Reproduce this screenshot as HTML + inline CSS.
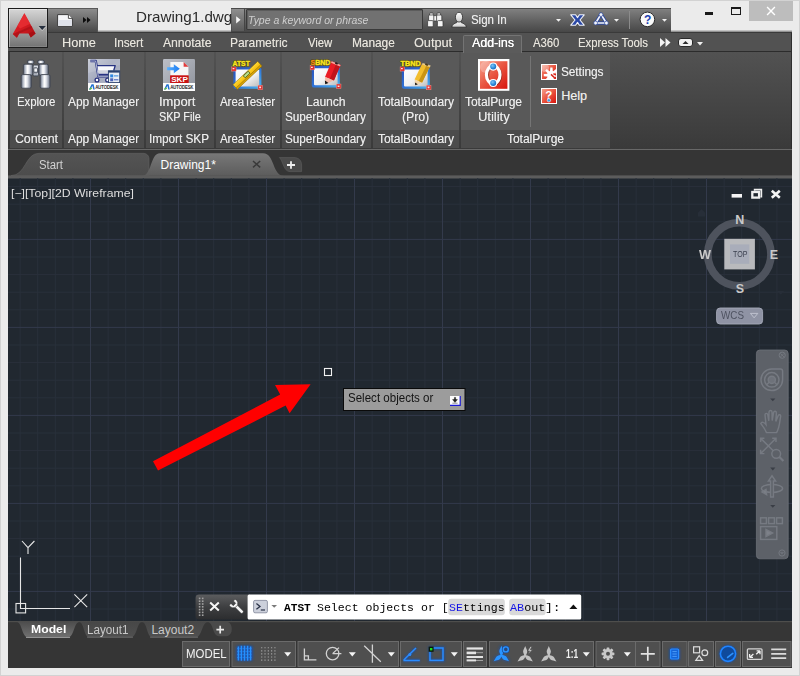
<!DOCTYPE html>
<html>
<head>
<meta charset="utf-8">
<title>Drawing1.dwg</title>
<style>
*{box-sizing:border-box;margin:0;padding:0}
html,body{width:800px;height:676px;overflow:hidden}
body{background:#ebebeb;font-family:"Liberation Sans",sans-serif;position:relative;color:#e4e4e4}
.a{position:absolute}
.t{position:absolute;white-space:nowrap;line-height:14px;font-size:12px}
svg{position:absolute;overflow:visible}
#frame{left:0;top:0;width:800px;height:676px;border:1px solid #d2d2d2}
/* title bar */
#appbtn{left:8px;top:8px;width:40px;height:40px;border:1px solid #1c1c1c;background:linear-gradient(#d6d6d6,#aaaaaa 45%,#737373);box-shadow:inset 1px 1px 0 0 rgba(255,255,255,.35),inset -1px -1px 0 0 rgba(255,255,255,.12)}
#qat{left:48px;top:8px;width:50px;height:24px;background:linear-gradient(#8c8c8c,#6a6a6a 50%,#484848);border-top:1px solid #5a5a5a;border-right:1px solid #555}
#info{left:231px;top:8px;width:440px;height:24px;background:linear-gradient(#808080,#626262 50%,#474747);border-top:1px solid #4a4a4a}
#srch{left:246px;top:9px;width:177px;height:21px;background:#717171;border:1px solid #3a3a3a;border-radius:1px;box-shadow:inset 1px 1px 0 rgba(0,0,0,.18)}
#closeb{left:749px;top:1px;width:44px;height:20px;background:#bdbdbd}
/* menu bar */
#menubar{left:8px;top:31px;width:784px;height:20px;background:#525252;border-top:2px solid #3a3a3a;box-shadow:0 -0.5px 0 #9a9a9a}
#acttab{left:463px;top:35px;width:59px;height:18px;background:#5b5b5b;border:1px solid #747474;border-bottom:none;border-radius:2px 2px 0 0;z-index:2}
.t{z-index:3}
/* ribbon */
#ribbon{left:8px;top:51px;width:784px;height:98px;background:linear-gradient(#525252,#3a3a3a);border-top:1px solid #2c2c2c;border-left:2px solid #3a3a3a}
.p{top:52px;height:96px;background:#595959}
.pt{top:130px;height:18px;background:#4c4c4c}
.lb{color:#ebebeb}
/* doc tabs */
#tabbar{left:8px;top:149px;width:784px;height:30px;background:#353535;border-top:1px solid #686868}
/* drawing */
#draw{left:8px;top:178px;width:784px;height:443px;background:#212830;overflow:hidden}
/* layout tabs + status */
#laybar{left:8px;top:621px;width:784px;height:19px;background:#363636;border-top:1px solid #4a4a44}
#status{left:8px;top:640px;width:784px;height:28px;background:#353535}
.g{top:641px;height:26px;background:#505050;border:1px solid #6d6d6d}
</style>
</head>
<body>
<div id="frame" class="a"></div>

<!-- ===== TITLE BAR ===== -->
<div id="menubar" class="a"></div>
<div class="a" style="left:98px;top:31px;width:133px;height:1px;background:#939393"></div><div class="a" style="left:671px;top:31px;width:121px;height:1px;background:#939393"></div>
<div id="qat" class="a"></div>
<div id="appbtn" class="a"></div>
<div id="info" class="a"></div>
<div id="srch" class="a"></div>
<div id="closeb" class="a"></div>
<div class="t" style="left:135.94px;top:8.00px;font-size:15px;line-height:18px;transform:scaleX(1.013);transform-origin:0 0;color:#2b2b2b">Drawing1.dwg</div>
<!--TI0--><!-- App logo A -->
<svg style="left:8px;top:8px" width="40" height="40" viewBox="8 8 40 40">
<defs><linearGradient id="alg" x1="0" x2="1" y1="0" y2="1"><stop offset="0" stop-color="#e8262c"/><stop offset=".55" stop-color="#d01a20"/><stop offset="1" stop-color="#a80d12"/></linearGradient></defs>
<path d="M24.4 13.2L35.6 33.6L30.8 37.6L28.6 33.4H19.2L16.9 37.8L12.8 33.9z" fill="url(#alg)"/>
<path d="M24.4 13.2L30.2 23.8L20 28.6L17.6 25.6z" fill="#ea3036" opacity=".75"/>
<path d="M12.8 33.9L31.4 26L32.4 27.8L19.2 33.4L16.9 37.8z" fill="#ae1217" opacity=".85"/>
<path d="M28.6 33.4L33 31.4L35.6 33.6L30.8 37.6z" fill="#a50e13" opacity=".8"/>
<path d="M38.6 26H45.8L42.2 30z" fill="#27303f"/>
<path d="M38.2 26.6L42.2 30.8L46.2 26.6" fill="none" stroke="#d9d9d9" stroke-width=".7" opacity=".7"/>
</svg>

<!-- QAT: new doc + chevrons -->
<svg style="left:57px;top:14px" width="17" height="14" viewBox="0 0 17 14">
<path d="M0.6 0.6H11.4L15.4 4.4V12.4H0.6z" fill="#f4f5f8" stroke="#3c3c3c" stroke-width="1"/>
<path d="M1.2 6H14.8V11.8H1.2z" fill="#dfe2ea"/>
<path d="M11.4 0.6V4.4H15.4" fill="#fff" stroke="#3c3c3c" stroke-width=".9"/>
</svg>
<svg style="left:83px;top:17px" width="8" height="6" viewBox="0 0 8 6"><path d="M0 0L3.6 3L0 6zM4 0L7.6 3L4 6z" fill="#0c0c0c"/></svg>

<!-- search arrow button -->
<div class="a" style="left:232px;top:9px;width:13px;height:22px;background:linear-gradient(#8f8f8f,#5a5a5a);border-right:1px solid #444"></div>
<svg style="left:236px;top:16px" width="5" height="8" viewBox="0 0 5 8"><path d="M0.2 0.2L4.6 3.8L0.2 7.4z" fill="#f6f6f6"/></svg>
<div class="t" style="left:247.92px;top:14.00px;font-size:11px;line-height:13px;transform:scaleX(0.953);transform-origin:0 0;color:#cfcfcf;font-style:italic">Type a keyword or phrase</div>

<!-- binoculars small -->
<svg style="left:427px;top:12px" width="17" height="16" viewBox="427 12 17 16">
<g fill="#f4f4f4" stroke="#2e2e2e" stroke-width=".7">
<rect x="429.6" y="13" width="3.6" height="3" rx=".8"/><rect x="437" y="13" width="3.6" height="3" rx=".8"/>
<rect x="433" y="15.6" width="4.2" height="5.4" rx=".6"/>
<rect x="428.6" y="15" width="5.2" height="6.4" rx="1"/><rect x="436.6" y="15" width="5.2" height="6.4" rx="1"/>
<rect x="427.6" y="20.6" width="5.6" height="6.2" rx="1"/><rect x="437.4" y="20.6" width="5.6" height="6.2" rx="1"/>
</g></svg>
<!-- user -->
<svg style="left:451px;top:11px" width="17" height="17" viewBox="451 11 17 17">
<defs><linearGradient id="usr" x1="0" x2="0" y1="0" y2="1"><stop offset="0" stop-color="#ffffff"/><stop offset="1" stop-color="#c9c9c9"/></linearGradient></defs>
<path d="M451.8 27.2C452.2 24.2 454.4 23.4 456.8 22.6V21.4H461.2V22.6C463.6 23.4 465.8 24.2 466.4 27.2z" fill="url(#usr)" stroke="#2a2a2a" stroke-width=".8"/>
<ellipse cx="459" cy="17.2" rx="3.6" ry="4.9" fill="url(#usr)" stroke="#2a2a2a" stroke-width=".8"/>
</svg>
<div class="t" style="left:471.36px;top:13.00px;font-size:12px;line-height:14px;transform:scaleX(0.952);transform-origin:0 0;color:#ededed;text-shadow:.25px 0 0 rgba(237,237,237,.55)">Sign In</div>
<svg style="left:556px;top:19px" width="5" height="3" viewBox="0 0 5 3"><path d="M0 0H5L2.5 2.8z" fill="#f2f2f2"/></svg>
<!-- X (exchange) -->
<svg style="left:570px;top:14px" width="15" height="12" viewBox="0 0 15 12">
<path d="M0.8 0.8H5.6L7.5 3.6L9.4 0.8H14.2L10 6L14.2 11.2H9.4L7.5 8.4L5.6 11.2H0.8L5 6z" fill="#2a48a6" stroke="#f1f3fa" stroke-width="1.1" stroke-linejoin="round"/>
</svg>
<!-- A360 triangle -->
<svg style="left:593px;top:12px" width="16" height="14" viewBox="0 0 16 14">
<path d="M8 2.4L13.4 11H2.6z" fill="none" stroke="#2f4a9c" stroke-width="3.4" stroke-linejoin="round"/>
<path d="M8 2.4L13.4 11H2.6z" fill="none" stroke="#f4f6fb" stroke-width="1.7" stroke-linejoin="round"/>
<circle cx="8" cy="2.6" r="1.9" fill="#f4f6fb" stroke="#2f4a9c" stroke-width=".7"/><circle cx="2.6" cy="11" r="1.9" fill="#f4f6fb" stroke="#2f4a9c" stroke-width=".7"/><circle cx="13.4" cy="11" r="1.9" fill="#f4f6fb" stroke="#2f4a9c" stroke-width=".7"/>
</svg>
<svg style="left:614px;top:19px" width="5" height="3" viewBox="0 0 5 3"><path d="M0 0H5L2.5 2.8z" fill="#f2f2f2"/></svg>
<div class="a" style="left:629px;top:11px;width:1px;height:18px;background:#8b8b8b"></div>
<!-- help ? -->
<svg style="left:639px;top:11px" width="17" height="17" viewBox="0 0 17 17">
<circle cx="8.4" cy="8.4" r="7.3" fill="#fafafa" stroke="#2b2b2b" stroke-width="1"/>
<text x="4.9" y="12.7" font-family="Liberation Sans,sans-serif" font-weight="bold" font-size="12" fill="#2140b0">?</text>
</svg>
<svg style="left:662px;top:19px" width="5" height="3" viewBox="0 0 5 3"><path d="M0 0H5L2.5 2.8z" fill="#f2f2f2"/></svg>

<!-- window controls -->
<div class="a" style="left:705px;top:12px;width:8px;height:2.7px;background:#1a1a1a"></div>
<div class="a" style="left:731px;top:7px;width:10px;height:8px;border:1px solid #1a1a1a;border-top-width:2px"></div>
<svg style="left:766px;top:6px" width="10" height="10" viewBox="0 0 10 10"><path d="M1.1 1.1L8.9 8.9M8.9 1.1L1.1 8.9" stroke="#fff" stroke-width="1.4"/></svg>
<!--TI1-->

<!-- ===== MENU ===== -->
<div id="acttab" class="a"></div>
<div class="t" style="left:61.53px;top:35.00px;font-size:13px;line-height:16px;transform:scaleX(0.973);transform-origin:0 0;color:#e9e6de;text-shadow:.25px 0 0 rgba(233,230,222,.5)">Home</div>
<div class="t" style="left:114.06px;top:35.00px;font-size:13px;line-height:16px;transform:scaleX(0.899);transform-origin:0 0;color:#e9e6de;text-shadow:.25px 0 0 rgba(233,230,222,.5)">Insert</div>
<div class="t" style="left:163.44px;top:35.00px;font-size:13px;line-height:16px;transform:scaleX(0.930);transform-origin:0 0;color:#e9e6de;text-shadow:.25px 0 0 rgba(233,230,222,.5)">Annotate</div>
<div class="t" style="left:230.28px;top:35.00px;font-size:13px;line-height:16px;transform:scaleX(0.916);transform-origin:0 0;color:#e9e6de;text-shadow:.25px 0 0 rgba(233,230,222,.5)">Parametric</div>
<div class="t" style="left:307.93px;top:35.00px;font-size:13px;line-height:16px;transform:scaleX(0.860);transform-origin:0 0;color:#e9e6de;text-shadow:.25px 0 0 rgba(233,230,222,.5)">View</div>
<div class="t" style="left:351.59px;top:35.00px;font-size:13px;line-height:16px;transform:scaleX(0.909);transform-origin:0 0;color:#e9e6de;text-shadow:.25px 0 0 rgba(233,230,222,.5)">Manage</div>
<div class="t" style="left:414.02px;top:35.00px;font-size:13px;line-height:16px;transform:scaleX(0.974);transform-origin:0 0;color:#e9e6de;text-shadow:.25px 0 0 rgba(233,230,222,.5)">Output</div>
<div class="t" style="left:472.44px;top:35.00px;font-size:13px;line-height:16px;transform:scaleX(0.950);transform-origin:0 0;color:#fff;text-shadow:0.3px 0 0 #fff">Add-ins</div>
<div class="t" style="left:532.95px;top:35.00px;font-size:13px;line-height:16px;transform:scaleX(0.862);transform-origin:0 0;color:#e9e6de;text-shadow:.25px 0 0 rgba(233,230,222,.5)">A360</div>
<div class="t" style="left:577.83px;top:35.00px;font-size:13px;line-height:16px;transform:scaleX(0.866);transform-origin:0 0;color:#e9e6de;text-shadow:.25px 0 0 rgba(233,230,222,.5)">Express Tools</div>
<svg style="left:660px;top:38px" width="11" height="9" viewBox="0 0 11 9"><path d="M0 0L5 4.5L0 9zM5.5 0L10.5 4.5L5.5 9z" fill="#f2f2f2"/></svg>
<svg style="left:678px;top:38px" width="15" height="9" viewBox="0 0 15 9"><rect x="0.5" y="0.5" width="14" height="8" rx="2.5" fill="#f0f0f0" stroke="#2a2a2a"/><path d="M4.5 6L7.5 3L10.5 6z" fill="#2b2b2b"/></svg>
<svg style="left:697px;top:42px" width="6" height="4" viewBox="0 0 6 4"><path d="M0 0H6L3 3.5z" fill="#efefef"/></svg>


<!-- ===== RIBBON ===== -->
<div id="ribbon" class="a"></div>
<div class="a" style="left:791px;top:33px;width:1px;height:116px;background:#2e2e2e"></div>
<div class="a p" style="left:10px;width:52px"></div><div class="a pt" style="left:10px;width:52px"></div>
<div class="a p" style="left:64px;width:80px"></div><div class="a pt" style="left:64px;width:80px"></div>
<div class="a p" style="left:146px;width:68px"></div><div class="a pt" style="left:146px;width:68px"></div>
<div class="a p" style="left:216px;width:64px"></div><div class="a pt" style="left:216px;width:64px"></div>
<div class="a p" style="left:282px;width:89px"></div><div class="a pt" style="left:282px;width:89px"></div>
<div class="a p" style="left:373px;width:86px"></div><div class="a pt" style="left:373px;width:86px"></div>
<div class="a p" style="left:461px;width:149px"></div><div class="a pt" style="left:461px;width:149px"></div>
<div class="a" style="left:530px;top:56px;width:1px;height:71px;background:#757575"></div>
<div class="t" style="left:16.50px;top:95.00px;font-size:12.5px;line-height:15px;transform:scaleX(0.902);transform-origin:0 0;color:#ededed;text-shadow:.25px 0 0 rgba(237,237,237,.55)">Explore</div>
<div class="t" style="left:68.44px;top:95.00px;font-size:12.5px;line-height:15px;transform:scaleX(0.947);transform-origin:0 0;color:#ededed;text-shadow:.25px 0 0 rgba(237,237,237,.55)">App Manager</div>
<div class="t" style="left:159.26px;top:95.00px;font-size:12.5px;line-height:15px;transform:scaleX(1.027);transform-origin:0 0;color:#ededed;text-shadow:.25px 0 0 rgba(237,237,237,.55)">Import</div>
<div class="t" style="left:158.69px;top:110.00px;font-size:12.5px;line-height:15px;transform:scaleX(0.861);transform-origin:0 0;color:#ededed;text-shadow:.25px 0 0 rgba(237,237,237,.55)">SKP File</div>
<div class="t" style="left:219.95px;top:95.00px;font-size:12.5px;line-height:15px;transform:scaleX(0.910);transform-origin:0 0;color:#ededed;text-shadow:.25px 0 0 rgba(237,237,237,.55)">AreaTester</div>
<div class="t" style="left:306.04px;top:95.00px;font-size:12.5px;line-height:15px;transform:scaleX(0.964);transform-origin:0 0;color:#ededed;text-shadow:.25px 0 0 rgba(237,237,237,.55)">Launch</div>
<div class="t" style="left:285.44px;top:110.00px;font-size:12.5px;line-height:15px;transform:scaleX(0.930);transform-origin:0 0;color:#ededed;text-shadow:.25px 0 0 rgba(237,237,237,.55)">SuperBoundary</div>
<div class="t" style="left:377.91px;top:95.00px;font-size:12.5px;line-height:15px;transform:scaleX(0.951);transform-origin:0 0;color:#ededed;text-shadow:.25px 0 0 rgba(237,237,237,.55)">TotalBoundary</div>
<div class="t" style="left:402.05px;top:110.00px;font-size:12.5px;line-height:15px;transform:scaleX(0.976);transform-origin:0 0;color:#ededed;text-shadow:.25px 0 0 rgba(237,237,237,.55)">(Pro)</div>
<div class="t" style="left:465.41px;top:95.00px;font-size:12.5px;line-height:15px;transform:scaleX(0.953);transform-origin:0 0;color:#ededed;text-shadow:.25px 0 0 rgba(237,237,237,.55)">TotalPurge</div>
<div class="t" style="left:477.66px;top:110.00px;font-size:12.5px;line-height:15px;transform:scaleX(1.035);transform-origin:0 0;color:#ededed;text-shadow:.25px 0 0 rgba(237,237,237,.55)">Utility</div>
<div class="t" style="left:561.13px;top:65.00px;font-size:12.5px;line-height:15px;transform:scaleX(0.939);transform-origin:0 0;color:#ededed;text-shadow:.25px 0 0 rgba(237,237,237,.55)">Settings</div>
<div class="t" style="left:561.20px;top:89.00px;font-size:12.5px;line-height:15px;color:#ededed;text-shadow:.25px 0 0 rgba(237,237,237,.55)">Help</div>
<div class="t" style="left:14.50px;top:132.00px;font-size:12.5px;line-height:15px;transform:scaleX(0.981);transform-origin:0 0;color:#ededed;text-shadow:.25px 0 0 rgba(237,237,237,.55)">Content</div>
<div class="t" style="left:68.44px;top:132.00px;font-size:12.5px;line-height:15px;transform:scaleX(0.947);transform-origin:0 0;color:#ededed;text-shadow:.25px 0 0 rgba(237,237,237,.55)">App Manager</div>
<div class="t" style="left:149.05px;top:132.00px;font-size:12.5px;line-height:15px;transform:scaleX(0.938);transform-origin:0 0;color:#ededed;text-shadow:.25px 0 0 rgba(237,237,237,.55)">Import SKP</div>
<div class="t" style="left:219.95px;top:132.00px;font-size:12.5px;line-height:15px;transform:scaleX(0.910);transform-origin:0 0;color:#ededed;text-shadow:.25px 0 0 rgba(237,237,237,.55)">AreaTester</div>
<div class="t" style="left:285.44px;top:132.00px;font-size:12.5px;line-height:15px;transform:scaleX(0.930);transform-origin:0 0;color:#ededed;text-shadow:.25px 0 0 rgba(237,237,237,.55)">SuperBoundary</div>
<div class="t" style="left:377.91px;top:132.00px;font-size:12.5px;line-height:15px;transform:scaleX(0.951);transform-origin:0 0;color:#ededed;text-shadow:.25px 0 0 rgba(237,237,237,.55)">TotalBoundary</div>
<div class="t" style="left:507.41px;top:132.00px;font-size:12.5px;line-height:15px;transform:scaleX(0.953);transform-origin:0 0;color:#ededed;text-shadow:.25px 0 0 rgba(237,237,237,.55)">TotalPurge</div>
<!--RI0--><svg width="0" height="0" style="left:0;top:0"><defs>
<linearGradient id="met" x1="0" x2="1" y1="0" y2="0"><stop offset="0" stop-color="#596070"/><stop offset=".2" stop-color="#b3bac7"/><stop offset=".42" stop-color="#ffffff"/><stop offset=".6" stop-color="#e6e9f0"/><stop offset=".85" stop-color="#9299a8"/><stop offset="1" stop-color="#565d6c"/></linearGradient>
<linearGradient id="met2" x1="0" x2="0" y1="0" y2="1"><stop offset="0" stop-color="#c9ced8"/><stop offset=".5" stop-color="#ffffff"/><stop offset="1" stop-color="#8d95a3"/></linearGradient>
<linearGradient id="amg" x1="0" x2="1" y1="0" y2="1"><stop offset="0" stop-color="#c3c7d3"/><stop offset=".45" stop-color="#a3a9bd"/><stop offset="1" stop-color="#bfc3cf"/></linearGradient>
<linearGradient id="skg" x1="0" x2="1" y1="0" y2="1"><stop offset="0" stop-color="#bcbfc7"/><stop offset="1" stop-color="#8f939c"/></linearGradient>
<linearGradient id="barw" x1="0" x2="1" y1="0" y2="1"><stop offset="0" stop-color="#ffffff"/><stop offset=".55" stop-color="#f1f1f1"/><stop offset="1" stop-color="#bdbdbd"/></linearGradient>
<linearGradient id="bluf" x1="0" x2="1" y1="0" y2="1"><stop offset="0" stop-color="#2a4fb8"/><stop offset=".5" stop-color="#2f72d6"/><stop offset="1" stop-color="#48b8f4"/></linearGradient>
<linearGradient id="arb" x1="0" x2="1" y1="0" y2="0"><stop offset="0" stop-color="#58b0ff"/><stop offset="1" stop-color="#1f7cf0"/></linearGradient>
<linearGradient id="redg" x1="0" x2="1" y1="0" y2="1"><stop offset="0" stop-color="#f6a08c"/><stop offset=".45" stop-color="#ea5a45"/><stop offset="1" stop-color="#d8140c"/></linearGradient>
<radialGradient id="sph" cx=".4" cy=".35" r=".7"><stop offset="0" stop-color="#7fc4f4"/><stop offset=".6" stop-color="#2b8bdc"/><stop offset="1" stop-color="#1b62b5"/></radialGradient>
<linearGradient id="yel" x1="0" x2="0" y1="0" y2="1"><stop offset="0" stop-color="#ffd93a"/><stop offset=".55" stop-color="#f7c010"/><stop offset="1" stop-color="#d19a00"/></linearGradient>
<g id="adsk"><rect x="0" y="24" width="32" height="8" fill="#fdfdfd"/><path d="M1 30.6L3.6 25.2L5.6 25.2L6.8 30.6L5.3 30.6L4.4 26.8L2.6 30.6z" fill="#1f6fd0"/><path d="M1 30.6L2.4 28.6L4.4 29.4L2.6 30.6z" fill="#5cbf3a"/><text x="7.6" y="29.9" font-family="Liberation Sans,sans-serif" font-size="4.6" textLength="22.8" lengthAdjust="spacingAndGlyphs" fill="#0a0a0a" stroke="#0a0a0a" stroke-width=".15">AUTODESK</text></g>
<g id="winfr"><rect x="2" y="7.6" width="28" height="21.6" rx="2.2" fill="url(#bluf)"/><rect x="4.2" y="9.8" width="23.6" height="17" rx="1" fill="url(#barw)"/><rect x="0.3" y="7.3" width="4.4" height="4.2" fill="#e12a2a" stroke="#f4a8a0" stroke-width=".4"/><rect x="26.6" y="25.6" width="4.6" height="4.6" fill="#e12a2a" stroke="#f4a8a0" stroke-width=".4"/><path d="M1.2 8.3h1.8v1.4h-1.8zM27.8 27h1.9v1.6h-1.9z" fill="#fbe0e0"/></g>
</defs></svg>

<!-- Explore binoculars -->
<svg style="left:14px;top:54px" width="44" height="42" viewBox="14 54 44 42">
<g stroke="#3f4550" stroke-width=".9">
<rect x="27.4" y="60.2" width="6.6" height="3.6" rx="1.5" fill="url(#met)"/>
<rect x="37.6" y="60.2" width="6.8" height="3.6" rx="1.5" fill="url(#met)"/>
<rect x="33" y="65" width="5.6" height="11" rx="1.2" fill="url(#met2)"/>
<rect x="23.3" y="64.2" width="9.6" height="11" rx="1.6" fill="url(#met)"/>
<rect x="38.8" y="64.2" width="9.6" height="11" rx="1.6" fill="url(#met)"/>
<rect x="21.1" y="74.6" width="10.2" height="13.6" rx="1.6" fill="url(#met)"/>
<rect x="40.1" y="74.6" width="10" height="13.6" rx="1.6" fill="url(#met)"/>
<rect x="33.8" y="67.8" width="3.8" height="5" rx=".8" fill="url(#met2)" stroke="#3d434e"/>
</g>
</svg>

<!-- App Manager -->
<svg style="left:88px;top:59px" width="32" height="32" viewBox="0 0 32 32">
<rect width="32" height="32" fill="url(#amg)"/>
<path d="M0 14L32 6V0H0z" fill="#fff" opacity=".12"/>
<path d="M2.4 2H7.8L10.4 17.3H21.2" fill="none" stroke="#283382" stroke-width="2.3" stroke-linejoin="round"/>
<path d="M8.7 6.6H27.2L24.6 15.2H10.1z" fill="#f7f8fb" stroke="#283382" stroke-width="1.4" stroke-linejoin="round"/>
<path d="M9.9 11.2H25.6L24.4 14.6H10.4z" fill="#d3d6df"/>
<path d="M2.6 2H7.7L10.3 17.3H21" fill="none" stroke="#eef0f7" stroke-width=".7" stroke-linejoin="round"/>
<circle cx="9" cy="21" r="1.9" fill="#fff" stroke="#27307c" stroke-width="1.3"/>
<circle cx="19.6" cy="21" r="1.9" fill="#fff" stroke="#27307c" stroke-width="1.3"/>
<rect x="20.4" y="11.8" width="11.3" height="11.8" fill="#e9edf3" stroke="#2a406e" stroke-width=".9"/>
<rect x="20.4" y="11.8" width="11.3" height="1.8" fill="#2a406e"/>
<rect x="22.2" y="15.4" width="3" height="3" fill="#2f86e0"/><rect x="26" y="16.4" width="4.4" height="1" fill="#2f86e0"/>
<rect x="22.2" y="19.3" width="3" height="3" fill="#4a63b8"/><rect x="26" y="20.3" width="4.4" height="1" fill="#3a5bb8"/>
<use href="#adsk"/>
</svg>

<!-- Import SKP -->
<svg style="left:163px;top:59px" width="32" height="32" viewBox="0 0 32 32">
<rect width="32" height="32" rx="1.2" fill="url(#skg)"/>
<path d="M7.4 3H20.6L25.4 7.8V17H7.4z" fill="#f6f6f6"/>
<path d="M20.6 3L25.4 7.8H20.6z" fill="#e23b3b"/>
<rect x="7.1" y="16.3" width="18.6" height="7.8" fill="#c91313"/>
<text x="8.2" y="23.2" font-family="Liberation Sans,sans-serif" font-weight="bold" font-size="7.2" textLength="16.6" lengthAdjust="spacingAndGlyphs" fill="#fff">SKP</text>
<path d="M4.1 8.3H10.8V5.3L16.8 9.8L10.8 14.3V11.3H4.1z" fill="url(#arb)"/>
<use href="#adsk"/>
</svg>

<!-- AreaTester -->
<svg style="left:231px;top:59px" width="32" height="32" viewBox="0 0 32 32">
<use href="#winfr" transform="translate(0.4,0.6)"/>
<g transform="translate(16.5,16.4) rotate(-43.3)">
<rect x="-17" y="-3.2" width="34" height="6.4" fill="url(#yel)" stroke="#8a6a00" stroke-width=".5"/>
<path d="M-17 1.4H17" stroke="#7a5c00" stroke-width=".5"/>
<rect x="-3.4" y="-2.6" width="6.8" height="2.8" rx=".8" fill="#b7e08a" stroke="#2b3a10" stroke-width=".7"/>
</g>
<text x="1.6" y="7" font-family="Liberation Sans,sans-serif" font-weight="bold" font-size="6.6" textLength="17.2" lengthAdjust="spacingAndGlyphs" fill="none" stroke="#3a3200" stroke-width="1.3" stroke-linejoin="round" opacity=".75">ATST</text><text x="1.6" y="7" font-family="Liberation Sans,sans-serif" font-weight="bold" font-size="6.6" textLength="17.2" lengthAdjust="spacingAndGlyphs" fill="#f9e41e" stroke="#f9e41e" stroke-width=".4">ATST</text>
</svg>

<!-- SuperBoundary -->
<svg style="left:310px;top:59px" width="32" height="32" viewBox="0 0 32 32">
<use href="#winfr" transform="translate(-0.2,-0.6)"/>
<g>
<path d="M21.7 2.2L30.6 6.1L23.9 21.6L15 17.9z" fill="#ea1c24"/>
<path d="M26.4 4.2L30.6 6.1L23.9 21.6L19.8 19.9z" fill="#c0141b"/>
<path d="M21.7 2.2L30.6 6.1L30 7.6L21.1 3.7z" fill="#f4a9a0"/>
<ellipse cx="26.4" cy="4.4" rx="1.6" ry="1" transform="rotate(23 26.4 4.4)" fill="#2a1a1a"/>
<path d="M15 17.9L23.9 21.6L15.2 25.3z" fill="#f3b9a6"/>
<path d="M14.9 21.6L18.4 23.9L15.2 25.3z" fill="#111"/>
</g>
<text x="0.6" y="5.9" font-family="Liberation Sans,sans-serif" font-weight="bold" font-size="6.6" textLength="19.8" lengthAdjust="spacingAndGlyphs" fill="none" stroke="#3a3200" stroke-width="1.3" stroke-linejoin="round" opacity=".75">SBND</text><text x="0.6" y="5.9" font-family="Liberation Sans,sans-serif" font-weight="bold" font-size="6.6" textLength="19.8" lengthAdjust="spacingAndGlyphs" fill="#f9e41e" stroke="#f9e41e" stroke-width=".4"><tspan fill="#f08a10" stroke="#f08a10">S</tspan>BND</text>
</svg>

<!-- TotalBoundary -->
<svg style="left:400px;top:60px" width="32" height="32" viewBox="0 0 32 32">
<use href="#winfr" transform="translate(-0.2,-0.4)"/>
<g>
<path d="M22 4L30 6.6L22 22.8L14.6 19.6z" fill="#f2bd2c"/>
<path d="M26.4 5.4L30 6.6L22 22.8L18.6 21.3z" fill="#c99414"/>
<path d="M22.6 3L30.6 5.6L30 7.2L22 4.4z" fill="#e8c98a"/>
<ellipse cx="26.6" cy="4.6" rx="1.7" ry="1" transform="rotate(20 26.6 4.6)" fill="#4a3a1a"/>
<path d="M14.6 19.6L22 22.8L15.3 25.2z" fill="#f0d3a6"/>
<path d="M14.9 22.4L17.8 24.3L15.3 25.2z" fill="#111"/>
</g>
<text x="0.6" y="5.6" font-family="Liberation Sans,sans-serif" font-weight="bold" font-size="6.4" textLength="20" lengthAdjust="spacingAndGlyphs" fill="none" stroke="#3a3200" stroke-width="1.3" stroke-linejoin="round" opacity=".75">TBND</text><text x="0.6" y="5.6" font-family="Liberation Sans,sans-serif" font-weight="bold" font-size="6.4" textLength="20" lengthAdjust="spacingAndGlyphs" fill="#f9e41e" stroke="#f9e41e" stroke-width=".4">TBND</text>
</svg>

<!-- TotalPurge -->
<svg style="left:478px;top:59px;overflow:hidden" width="32" height="32" viewBox="0 0 32 32">
<rect x="0" y="0" width="31.4" height="31.8" fill="#fff"/>
<rect x="2" y="2.2" width="27.4" height="27.6" fill="url(#redg)"/>
<ellipse cx="8" cy="8" rx="6" ry="6" fill="#fff" opacity=".25"/>
<ellipse cx="16.2" cy="16.6" rx="6.6" ry="8.8" fill="none" stroke="#5e2019" stroke-width="3" opacity=".5"/>
<ellipse cx="15.2" cy="15.8" rx="6.8" ry="8.9" fill="none" stroke="#fff" stroke-width="3.1"/>
<circle cx="15.2" cy="7.6" r="4.1" fill="#fff"/><circle cx="15.2" cy="7.6" r="3" fill="url(#sph)"/>
<circle cx="15.2" cy="24" r="4.1" fill="#fff"/><circle cx="15.2" cy="24" r="3" fill="url(#sph)"/>
</svg>

<!-- Settings -->
<svg style="left:541px;top:64px;overflow:hidden" width="16" height="16" viewBox="0 0 16 16">
<rect width="16" height="16" fill="#fff"/><rect x="1" y="1" width="14" height="14" fill="url(#redg)"/>
<circle cx="4" cy="4" r="4" fill="#fff" opacity=".3"/>
<g transform="translate(10.4,11.2)" fill="#fff">
<circle r="4.1"/>
<g id="tth"><path d="M-1.5 -3L-1.1 -7.6H1.1L1.5 -3z"/></g>
<use href="#tth" transform="rotate(-45)"/><use href="#tth" transform="rotate(-90)"/><use href="#tth" transform="rotate(45)"/><use href="#tth" transform="rotate(-135)"/><use href="#tth" transform="rotate(90)"/>
</g>
<path d="M10 10.4L14.6 14.8M12.4 9.6L15 11" stroke="#d8281c" stroke-width="1.5"/>
<rect x="0.5" y="0.5" width="15" height="15" fill="none" stroke="#fff"/>
</svg>

<!-- Help -->
<svg style="left:541px;top:88px" width="16" height="16" viewBox="0 0 16 16">
<rect width="16" height="16" fill="#fff"/><rect x="1" y="1" width="14" height="14" fill="url(#redg)"/>
<text x="4.2" y="11" font-family="Liberation Sans,sans-serif" font-weight="bold" font-size="11.5" fill="#fff">?</text>
<circle cx="7.9" cy="12.3" r="1.7" fill="#3b9ae8" stroke="#fff" stroke-width=".6"/>
</svg>
<!--RI1-->


<!-- ===== DOC TABS ===== -->
<div id="tabbar" class="a"></div>
<!--DT0--><svg style="left:8px;top:150px" width="784" height="29" viewBox="8 150 784 29">
<defs><linearGradient id="tabA" x1="0" x2="0" y1="0" y2="1"><stop offset="0" stop-color="#787878"/><stop offset="1" stop-color="#5c5c5c"/></linearGradient>
<linearGradient id="tabI" x1="0" x2="0" y1="0" y2="1"><stop offset="0" stop-color="#545454"/><stop offset="1" stop-color="#4c4c4c"/></linearGradient></defs>
<rect x="8" y="175.4" width="784" height="3.6" fill="#5c5c5c"/>
<!-- Start tab -->
<path d="M11 175.6C26 175.6 25 153.3 39 153.3H143C147 153.3 149 156 149 159V175.6z" fill="url(#tabI)" stroke="#616161" stroke-width=".6"/>
<!-- plus tab -->
<path d="M279.4 157.6H294C299 157.6 301.6 161 301.6 165V171.6H290C283.4 171.6 283 160.4 279.4 157.6z" fill="#4b4b4b" stroke="#5a5a5a" stroke-width=".7"/>
<!-- active tab -->
<path d="M142 175.8C152 175.8 150 153.2 160 153.2H263C275 153.2 272 175.8 284 175.8z" fill="url(#tabA)"/>
<path d="M253 161L260.2 167.4M260.2 161L253 167.4" stroke="#3a3a3a" stroke-width="1.5"/>
<path d="M287 165H295M291 161.2V168.8" stroke="#f0f0f0" stroke-width="1.8"/>
</svg>
<div class="t" style="left:38.96px;top:158.00px;font-size:12px;line-height:14px;transform:scaleX(0.945);transform-origin:0 0;color:#d2d2d2">Start</div>
<div class="t" style="left:160.50px;top:158.00px;font-size:12px;line-height:14px;color:#fff">Drawing1*</div>
<!--DT1-->

<!-- ===== DRAWING AREA ===== -->
<div id="draw" class="a">
<svg style="left:0;top:0" width="784" height="443" viewBox="8 178 784 443">
<rect x="8" y="178" width="784" height="0.5" fill="#5c5c5c"/>
<path d="M20.1 178V621M37.7 178V621M55.3 178V621M72.9 178V621M108.1 178V621M125.7 178V621M143.3 178V621M160.9 178V621M196.1 178V621M213.7 178V621M231.3 178V621M248.9 178V621M284.1 178V621M301.7 178V621M319.3 178V621M336.9 178V621M372.1 178V621M389.7 178V621M407.3 178V621M424.9 178V621M460.1 178V621M477.7 178V621M495.3 178V621M512.9 178V621M548.1 178V621M565.7 178V621M583.3 178V621M600.9 178V621M636.1 178V621M653.7 178V621M671.3 178V621M688.9 178V621M724.1 178V621M741.7 178V621M759.3 178V621M776.9 178V621M8 186.6H792M8 204.2H792M8 221.8H792M8 257.0H792M8 274.6H792M8 292.2H792M8 309.8H792M8 345.0H792M8 362.6H792M8 380.2H792M8 397.8H792M8 433.0H792M8 450.6H792M8 468.2H792M8 485.8H792M8 521.0H792M8 538.6H792M8 556.2H792M8 573.8H792M8 609.0H792" stroke="#29303b" stroke-width="1" fill="none"/>
<path d="M90.5 178V621M178.5 178V621M266.5 178V621M354.5 178V621M442.5 178V621M530.5 178V621M618.5 178V621M706.5 178V621M8 239.4H792M8 327.4H792M8 415.4H792M8 503.4H792M8 591.4H792" stroke="#333a4b" stroke-width="1" fill="none"/>
<!--DS0--><!-- red arrow -->
<path d="M153 461.3L280.2 394.6L275 385L310.6 384.2L289.6 413.3L285.6 405.6L158 470.6z" fill="#ff0000"/>
<!-- pickbox -->
<rect x="324.5" y="368.5" width="7" height="7" fill="none" stroke="#f2f2f2" stroke-width="1.1"/>
<!-- UCS icon -->
<g stroke="#e6e6e6" stroke-width="1.1" fill="none">
<path d="M20.5 557.5V608.5H70"/><rect x="16" y="603.5" width="9.6" height="9.4"/>
<path d="M22 541L28 547.6L34.4 541M28 547.6V554"/>
<path d="M74.4 594.4L87.2 607.2M87.2 594.4L74.4 607.2"/>
</g>
<!-- viewport controls -->
<rect x="731.6" y="194" width="10.4" height="3.6" fill="#f4f4f4"/>
<g stroke="#f0f0f0" fill="none"><path d="M754.6 190.8V189.6H761.4V196.6H760.4" stroke-width="1.6"/><rect x="752.3" y="192" width="6.8" height="5.6" stroke-width="2.3" fill="#212830"/></g>
<path d="M771.8 190.8L779.8 197.8M779.8 190.8L771.8 197.8" stroke="#f4f4f4" stroke-width="2.6"/>
<!-- viewcube -->
<circle cx="739.4" cy="254.3" r="31.6" fill="none" stroke="#4e535d" stroke-width="7.8"/>
<path d="M698 212.4L701.6 209.2L705.2 212.4V216.4H698z" fill="#272e38"/>
<path d="M777 291H784.6L780.8 294.8z" fill="#272e38"/>
<rect x="724.3" y="238.8" width="30.6" height="30.6" fill="#b9babd"/>
<rect x="730" y="244.4" width="19.3" height="19.4" fill="#a9adba"/>
<!-- WCS -->
<rect x="716.6" y="308" width="46" height="16" rx="3.5" fill="#8f93a4" stroke="#a6aab9" stroke-width=".9"/>
<path d="M750.4 313.4H757.8L754.1 317.8z" fill="none" stroke="#c3c6d2" stroke-width=".9"/>
<!-- nav bar -->
<rect x="756.4" y="350" width="31.8" height="208.8" rx="3.5" fill="#5d6168" stroke="#6d7178" stroke-width=".8"/>
<g stroke="#767a82" stroke-width="1.45" fill="none">
<circle cx="782.2" cy="355.2" r="3.1" stroke-width=".9"/><path d="M780.4 353.4L784 357M784 353.4L780.4 357" stroke-width=".8"/>
<circle cx="782" cy="553" r="3.1" stroke-width=".9"/><path d="M780.6 552.4H783.4L782 554.2z" stroke-width=".7"/>
<!-- wheel -->
<path d="M771.6 369H780.4Q782.6 369 782.6 371.2V379.8A10.8 10.8 0 1 1 771.6 369z"/>
<circle cx="771.8" cy="379.8" r="7.2"/><circle cx="771.8" cy="379.8" r="3.6" fill="#6e727a"/>
<path d="M766.6 384.8L769.2 382.3M777 384.8L774.4 382.3"/>
<!-- hand -->
<path d="M766.4 432.6C764.6 428 762.4 425.6 760.8 423.6C761.6 421.6 764 422 766 424.6L765 414.8C765.2 412.8 767.4 413 767.8 414.8L768.8 420.8L769 412C769.4 410 771.8 410 772 412L772.2 420.6L773.6 412.4C774.2 410.6 776.4 411 776.4 413L775.8 421.4L778.2 415.6C779 414 781 414.6 780.6 416.6C779.6 421.6 779.8 427 776.6 432.6z"/>
<!-- zoom extents -->
<path d="M760.6 438.2L775 452.6M776 438.2L760.6 453.6M760.6 442V438.2H764.4M772.2 438.2H776V442M760.6 449.8V453.6H764.4"/>
<circle cx="776.2" cy="453.8" r="4.4" fill="#5d6168"/><path d="M779.4 457L783.4 461" stroke-width="2.2"/>
<!-- orbit -->
<ellipse cx="772" cy="488.4" rx="10.6" ry="4"/>
<path d="M770.6 497V481H768.4L772 475.8L775.6 481H773.4V497z" fill="#5d6168"/>
<path d="M766 489.4L762 492L766.6 494.6z" fill="#7d8189"/>
<!-- showmotion -->
<rect x="760.6" y="517.8" width="5.8" height="5.8"/><rect x="768.6" y="517.8" width="5.8" height="5.8"/><rect x="776.6" y="517.8" width="5.8" height="5.8"/>
<rect x="760.6" y="526.6" width="16.2" height="12.8"/><path d="M766 529.4V536.6L772.6 533z" fill="#7d8189"/>
</g>
<g fill="#3a3e46"><path d="M770.2 398.4H775.4L772.8 401.2z"/><path d="M770.2 467.6H775.4L772.8 470.4z"/><path d="M770.2 505H775.4L772.8 507.8z"/></g>
<!-- tooltip -->
<rect x="343.5" y="388.5" width="121.5" height="22" fill="#9c9c9c" stroke="#0a0a0a" stroke-width="1"/>
<rect x="450" y="396" width="10" height="9.6" fill="#fdfdfd"/><path d="M450 405.3H460.2V396" fill="none" stroke="#1a1ad8" stroke-width="1.2"/>
<path d="M452.6 399.6H457.4L455 402.4zM454.4 397.4H455.6V400H454.4zM452.4 403.2H457.6" fill="#222" stroke="#222" stroke-width=".5"/>
<!-- command line -->
<defs><linearGradient id="cmdg" x1="0" x2="0" y1="0" y2="1"><stop offset="0" stop-color="#5c5d5f"/><stop offset=".5" stop-color="#3e3f41"/><stop offset="1" stop-color="#2c2d2f"/></linearGradient></defs>
<g transform="translate(0,-0.6)">
<path d="M199 595H250V620H199Q195.6 620 195.6 616.6V598.4Q195.6 595 199 595z" fill="url(#cmdg)"/>
<rect x="247.6" y="595" width="333.6" height="25" rx="1.5" fill="#ffffff"/>
<g fill="#a2a2a2"><rect x="198.8" y="598.2" width="1.6" height="1.6"/><rect x="201.9" y="598.2" width="1.6" height="1.6"/><rect x="198.8" y="601.0" width="1.6" height="1.6"/><rect x="201.9" y="601.0" width="1.6" height="1.6"/><rect x="198.8" y="603.8" width="1.6" height="1.6"/><rect x="201.9" y="603.8" width="1.6" height="1.6"/><rect x="198.8" y="606.6" width="1.6" height="1.6"/><rect x="201.9" y="606.6" width="1.6" height="1.6"/><rect x="198.8" y="609.4" width="1.6" height="1.6"/><rect x="201.9" y="609.4" width="1.6" height="1.6"/><rect x="198.8" y="612.2" width="1.6" height="1.6"/><rect x="201.9" y="612.2" width="1.6" height="1.6"/><rect x="198.8" y="615.0" width="1.6" height="1.6"/><rect x="201.9" y="615.0" width="1.6" height="1.6"/></g>
<path d="M210.2 603.2L218.8 611.2M218.8 603.2L210.2 611.2" stroke="#f6f6f6" stroke-width="2"/>
<!-- wrench -->
<g transform="translate(237,607.6) rotate(-45)"><path d="M-1.6 -2V7.6Q0 9.2 1.6 7.6V-2z" fill="#f4f4f4" stroke="#2a2a2a" stroke-width=".5"/><path d="M-4.2 -6.8A4.5 4.5 0 1 0 4.2 -6.8L1.7 -6.8V-3.6H-1.7V-6.8z" fill="#f4f4f4" stroke="#2a2a2a" stroke-width=".5"/></g>
<!-- prompt icon -->
<rect x="253.6" y="601" width="13.8" height="12.4" rx="1.4" fill="#ccd0db" stroke="#8a8fa0" stroke-width=".9"/>
<path d="M256.4 604.2L260 607L256.4 609.8" fill="none" stroke="#2b3348" stroke-width="1.3"/><path d="M260.8 610.6H265" stroke="#2b3348" stroke-width="1.2"/>
<path d="M271.4 605.6H277L274.2 608.4z" fill="#7a7a7a"/>
<rect x="448.2" y="599.4" width="56.6" height="16.4" rx="3" fill="#d9d9d9"/><rect x="509.2" y="599.4" width="36.4" height="16.4" rx="3" fill="#d9d9d9"/>
<path d="M569.4 609.6H577.4L573.4 605.2z" fill="#111"/>
</g>
<!--DS1-->
</svg>


</div>

<!--DH0--><div class="t" style="left:11.18px;top:187.00px;font-size:10.5px;line-height:13px;transform:scaleX(1.167);transform-origin:0 0;color:#dedede">[&minus;][Top][2D Wireframe]</div>
<div class="t" style="left:735.32px;top:213.00px;font-size:12.5px;line-height:15px;color:#c9c9c9;font-weight:bold">N</div>
<div class="t" style="left:735.63px;top:282.00px;font-size:12.5px;line-height:15px;color:#c9c9c9;font-weight:bold">S</div>
<div class="t" style="left:699.00px;top:248.00px;font-size:12.5px;line-height:15px;transform:scaleX(1.019);transform-origin:0 0;color:#c9c9c9;font-weight:bold">W</div>
<div class="t" style="left:769.72px;top:248.00px;font-size:12.5px;line-height:15px;color:#c9c9c9;font-weight:bold">E</div>
<div class="t" style="left:733.03px;top:249.00px;font-size:8.5px;line-height:10px;transform:scaleX(0.839);transform-origin:0 0;color:#3c4150">TOP</div>
<div class="t" style="left:721.16px;top:309.00px;font-size:11px;line-height:13px;transform:scaleX(0.895);transform-origin:0 0;color:#4e5260">WCS</div>
<div class="t" style="left:347.54px;top:391.00px;font-size:12.4px;line-height:15px;transform:scaleX(0.932);transform-origin:0 0;color:#141414">Select objects or</div>
<div class="t" style="left:284.20px;top:602.00px;font-size:11px;line-height:13px;transform:scaleX(1.015);transform-origin:0 0;color:#000;font-weight:bold;font-family:'Liberation Mono',monospace">ATST</div>
<div class="t" style="left:316.67px;top:602.00px;font-size:11px;line-height:13px;transform:scaleX(1.050);transform-origin:0 0;color:#000;font-family:'Liberation Mono',monospace">Select objects or [</div>
<div class="t" style="left:448.77px;top:602.00px;font-size:11px;line-height:13px;transform:scaleX(1.053);transform-origin:0 0;color:#000;font-family:'Liberation Mono',monospace"><span style="color:#1414e6">SE</span>ttings</div>
<div class="t" style="left:510.01px;top:602.00px;font-size:11px;line-height:13px;transform:scaleX(1.070);transform-origin:0 0;color:#000;font-family:'Liberation Mono',monospace"><span style="color:#1414e6">AB</span>out</div>
<div class="t" style="left:545.28px;top:602.00px;font-size:11px;line-height:13px;transform:scaleX(1.185);transform-origin:0 0;color:#000;font-family:'Liberation Mono',monospace">]:</div>
<!--DH1-->
<!-- ===== LAYOUT TABS / STATUS ===== -->
<div id="laybar" class="a"></div>
<div id="status" class="a"></div>
<!--LT0--><svg style="left:8px;top:621px" width="784" height="19" viewBox="8 621 784 19">
<defs><linearGradient id="ltA" x1="0" x2="0" y1="0" y2="1"><stop offset="0" stop-color="#4c4c4c"/><stop offset="1" stop-color="#727272"/></linearGradient>
<linearGradient id="ltI" x1="0" x2="0" y1="0" y2="1"><stop offset="0" stop-color="#474747"/><stop offset="1" stop-color="#505050"/></linearGradient></defs>
<rect x="8" y="621" width="784" height="1.2" fill="#4e4e4c"/>
<path d="M78 621.5C85 621.5 83 637.6 90 637.6H130C138 637.6 136 621.5 143 621.5z" fill="url(#ltI)"/>
<path d="M87 637.2H133" stroke="#6c6c6c" stroke-width=".9"/>
<path d="M141 621.5C148 621.5 146 637.6 153 637.6H195C203 637.6 201 621.5 209 621.5z" fill="url(#ltI)"/>
<path d="M150 637.2H198" stroke="#6c6c6c" stroke-width=".9"/>
<path d="M207 621.8C214 622 212 636.2 219 636.2H226C231 636.2 232.4 631 231.6 627C231 623.6 229 621.8 226 621.8z" fill="#4a4a4a"/>
<path d="M15.5 621.5C23 621.5 21 637.8 29 637.8H67C75 637.8 73 621.5 80.5 621.5z" fill="url(#ltA)"/>
<path d="M26 637.5H70" stroke="#9a9a9a" stroke-width=".9"/>
<path d="M216.4 629.6H224M220.2 625.8V633.4" stroke="#e8e8e8" stroke-width="1.7"/>
</svg>
<div class="t" style="left:30.63px;top:622.00px;font-size:11.8px;line-height:14px;transform:scaleX(1.036);transform-origin:0 0;color:#fff;font-weight:bold">Model</div>
<div class="t" style="left:87.43px;top:623.00px;font-size:12px;line-height:14px;transform:scaleX(0.974);transform-origin:0 0;color:#c9c9c9">Layout1</div>
<div class="t" style="left:151.40px;top:623.00px;font-size:12px;line-height:14px;color:#c9c9c9">Layout2</div>
<!--LT1-->
<!--ST0--><svg style="left:8px;top:640px" width="784" height="28" viewBox="8 640 784 28">
<defs>
<filter id="glow" x="-50%" y="-50%" width="200%" height="200%"><feGaussianBlur stdDeviation="1.3"/></filter>
<g id="star3"><path d="M0 -9.6C0.7 -7.4 2.1 -5.6 2.1 -4.1C2.1 -2.6 1 -1.2 0.5 0.8H-0.5C-1 -1.2 -2.1 -2.6 -2.1 -4.1C-2.1 -5.6 -0.7 -7.4 0 -9.6z"/><path d="M0 -9.6C0.7 -7.4 2.1 -5.6 2.1 -4.1C2.1 -2.6 1 -1.2 0.5 0.8H-0.5C-1 -1.2 -2.1 -2.6 -2.1 -4.1C-2.1 -5.6 -0.7 -7.4 0 -9.6z" transform="rotate(127)"/><path d="M0 -9.6C0.7 -7.4 2.1 -5.6 2.1 -4.1C2.1 -2.6 1 -1.2 0.5 0.8H-0.5C-1 -1.2 -2.1 -2.6 -2.1 -4.1C-2.1 -5.6 -0.7 -7.4 0 -9.6z" transform="rotate(-127)"/></g>
</defs>
<g fill="#4f4f4f" stroke="#6b6b6b" stroke-width="1">
<rect x="182.5" y="641.5" width="47" height="25"/>
<rect x="232" y="641.5" width="63.5" height="25"/>
<rect x="298" y="641.5" width="100.5" height="25"/>
<rect x="400.5" y="641.5" width="61" height="25"/>
<rect x="463.5" y="641.5" width="23" height="25"/>
<rect x="489.5" y="641.5" width="104" height="25"/>
<rect x="596" y="641.5" width="39.5" height="25"/>
<rect x="635.5" y="641.5" width="24.5" height="25"/>
<rect x="662.5" y="641.5" width="24.5" height="25"/>
<rect x="688.5" y="641.5" width="25" height="25"/>
<rect x="715.5" y="641.5" width="25" height="25"/>
<rect x="742.5" y="641.5" width="48.5" height="25"/>
</g>
<!-- grid (blue) -->
<rect x="236" y="645.4" width="17" height="15.6" rx="3" fill="#1a4fa8" filter="url(#glow)" opacity=".9"/>
<path d="M238.4 646.4V660.4M241.4 645.8V660.8M244.5 645.8V660.8M247.6 645.8V660.8M250.6 646.4V660.4" stroke="#2590ff" stroke-width="1.5"/>
<path d="M237 648.6H252M237 651.6H252M237 654.6H252M237 657.6H252" stroke="#2590ff" stroke-width=".8" stroke-dasharray="1 .5" opacity=".8"/>
<!-- dots -->
<g fill="#a6a6a6" transform="translate(0.15,0.15)">
<path d="M261 647h1.15v1.15h-1.15zM264.3 647h1.15v1.15h-1.15zM267.6 647h1.15v1.15h-1.15zM270.9 647h1.15v1.15h-1.15zM274.2 647h1.15v1.15h-1.15z M261 650.1h1.15v1.15h-1.15zM264.3 650.1h1.15v1.15h-1.15zM267.6 650.1h1.15v1.15h-1.15zM270.9 650.1h1.15v1.15h-1.15zM274.2 650.1h1.15v1.15h-1.15z M261 653.2h1.15v1.15h-1.15zM264.3 653.2h1.15v1.15h-1.15zM267.6 653.2h1.15v1.15h-1.15zM270.9 653.2h1.15v1.15h-1.15zM274.2 653.2h1.15v1.15h-1.15z M261 656.3h1.15v1.15h-1.15zM264.3 656.3h1.15v1.15h-1.15zM267.6 656.3h1.15v1.15h-1.15zM270.9 656.3h1.15v1.15h-1.15zM274.2 656.3h1.15v1.15h-1.15z M261 659.4h1.15v1.15h-1.15zM264.3 659.4h1.15v1.15h-1.15zM267.6 659.4h1.15v1.15h-1.15zM270.9 659.4h1.15v1.15h-1.15zM274.2 659.4h1.15v1.15h-1.15z"/>
</g>
<g fill="#f4f4f4">
<path d="M284.2 652.2H291.2L287.7 656.4z"/><path d="M348.8 652.2H355.8L352.3 656.4z"/><path d="M387.8 652.2H394.8L391.3 656.4z"/><path d="M450.8 652.2H457.8L454.3 656.4z"/><path d="M582.8 652.2H589.8L586.3 656.4z"/><path d="M623.8 652.2H630.8L627.3 656.4z"/>
</g>
<!-- ortho / polar / iso -->
<g stroke="#d2d2d2" stroke-width="1.3" fill="none">
<path d="M304.4 648.4V659.8H316.4M304.4 655.8H308.4V659.8"/>
<circle cx="332.6" cy="653.6" r="6.3"/><path d="M332.6 653.6H341.4M332.6 653.6L339 647.6"/>
<path d="M372.4 644.4V662.8M364.2 645.8L380.8 661.8"/>
</g>
<!-- blue angle + square -->
<g filter="url(#glow)" opacity=".8"><path d="M403.4 660.4H419.8M403.8 660L416 648" stroke="#1a4fa8" stroke-width="3" fill="none"/><rect x="430" y="648" width="13" height="12.4" fill="none" stroke="#1a4fa8" stroke-width="3"/></g>
<path d="M403.4 660.4H419.8M403.8 660L416 648" stroke="#2a8cff" stroke-width="1.5" fill="none"/><circle cx="409.8" cy="654.4" r="1.5" fill="#2a8cff"/>
<rect x="430" y="648" width="13" height="12.4" fill="none" stroke="#2a8cff" stroke-width="1.5"/>
<rect x="428.6" y="646.6" width="5" height="5.2" fill="#0a1a0a"/><rect x="430" y="648" width="2.4" height="2.4" fill="#1ee01e"/>
<!-- lines icon -->
<g fill="#e4e4e4"><rect x="466.6" y="647.4" width="16.4" height="2.2"/><rect x="466.6" y="651.6" width="9.4" height="2.6"/><rect x="466.6" y="656" width="16.4" height="2"/><rect x="466.6" y="659.4" width="9.4" height="2"/></g>
<rect x="476" y="652.2" width="7" height="1" fill="#a0a0a0"/><rect x="476" y="660" width="7" height="1" fill="#a0a0a0"/>
<!-- annotation icons -->
<use href="#star3" transform="translate(501.4,655.4) scale(1.12)" fill="#1a4fa8" filter="url(#glow)" opacity=".95"/>
<use href="#star3" transform="translate(501.4,655.4)" fill="#2a94ff"/>
<circle cx="505.8" cy="649.4" r="3.9" fill="#1d4a94"/>
<circle cx="505.8" cy="649.4" r="2.5" fill="#27477e" stroke="#2a94ff" stroke-width="1.4"/>
<use href="#star3" transform="translate(525.2,655.6)" fill="#c2c2c2"/>
<path d="M530.4 646.4L527.2 651H529.4L527.6 655L532.8 649.6H530.4L532.4 646.4z" fill="#c8c8c8" stroke="#4f4f4f" stroke-width=".9"/>
<use href="#star3" transform="translate(548.8,655.6)" fill="#c2c2c2"/>
<!-- gear -->
<g transform="translate(608,653.8)" fill="#c8c8c8"><circle r="4.7"/><g id="gt"><rect x="-1.4" y="-6.4" width="2.8" height="12.8" rx=".6"/></g><use href="#gt" transform="rotate(45)"/><use href="#gt" transform="rotate(90)"/><use href="#gt" transform="rotate(135)"/><circle r="2" fill="#4f4f4f"/></g>
<path d="M640.8 653.8H654.8M647.8 646.8V660.8" stroke="#e2e2e2" stroke-width="1.7"/>
<!-- blue doc -->
<rect x="669.4" y="647.8" width="10.4" height="12.4" rx="2" fill="#1a4fa8" filter="url(#glow)"/>
<rect x="670.6" y="649" width="8" height="10" rx="1" fill="#1464d8" stroke="#2a8cff" stroke-width="1.2"/>
<path d="M672.4 651.6H676.8M672.4 654H676.8M672.4 656.4H676.8" stroke="#58a8ff" stroke-width=".8"/>
<!-- shapes -->
<g stroke="#dcdcdc" stroke-width="1.2" fill="none"><rect x="693.6" y="646.8" width="6" height="6"/><circle cx="704.8" cy="652.8" r="2.9"/><path d="M699.2 655.6L702.6 660.4H695.8z"/></g>
<!-- blue circle -->
<circle cx="728" cy="653.8" r="8.6" fill="#1a4fa8" filter="url(#glow)"/>
<circle cx="728" cy="653.8" r="7.6" fill="#0f4a9c" stroke="#1f84ff" stroke-width="1.6"/>
<path d="M727.6 657.4L732.8 653.4" stroke="#2f94ff" stroke-width="1.6" stroke-linecap="round"/>
<!-- fullscreen -->
<rect x="747.4" y="648.8" width="14.6" height="10.6" rx="1" fill="none" stroke="#d4d4d4" stroke-width="1.3"/>
<path d="M749.6 657.4L753.4 654M749.6 657.4V654M749.6 657.4H753M760 650.8L756.2 654.2M760 650.8V654.2M760 650.8H756.6" stroke="#f0f0f0" stroke-width="1.3" fill="none"/>
<path d="M771.2 649.4H786.2M771.2 653.8H786.2M771.2 658.2H786.2" stroke="#dadada" stroke-width="1.8"/>
</svg>
<div class="t" style="left:186.09px;top:647.00px;font-size:12.6px;line-height:15px;transform:scaleX(0.908);transform-origin:0 0;color:#f2f2f2">MODEL</div>
<div class="t" style="left:565.77px;top:647.00px;font-size:12.5px;line-height:15px;transform:scaleX(0.671);transform-origin:0 0;color:#f2f2f2;font-weight:bold">1:1</div>
<!--ST1-->
</body>
</html>
